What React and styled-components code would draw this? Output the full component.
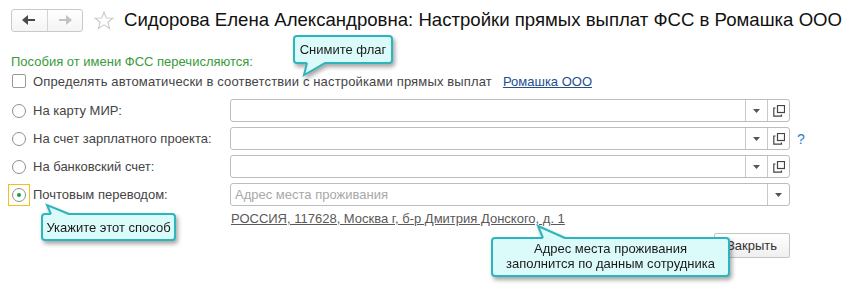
import React from "react";
import styled, { createGlobalStyle } from "styled-components";

const Global = createGlobalStyle`
  html, body {
    margin: 0;
    padding: 0;
    background: #fff;
  }
  body {
    font-family: "Liberation Sans", Arial, sans-serif;
    font-size: 13px;
    color: #4d4d4d;
  }
`;

const Page = styled.div`
  position: relative;
  width: 854px;
  height: 307px;
  padding: 8px 0 0 11px;
  box-sizing: border-box;
  overflow: hidden;
`;

const Header = styled.div`
  display: flex;
  align-items: center;
  height: 24px;
`;

const NavGroup = styled.div`
  display: flex;
  flex-shrink: 0;
  width: 72px;
  height: 23px;
  border: 1px solid #c9c9c9;
  border-radius: 3px;
  box-sizing: border-box;
  background: linear-gradient(#ffffff, #f4f4f4);
`;

const NavButton = styled.div`
  flex: 1;
  display: flex;
  align-items: center;
  justify-content: center;
  & + & {
    border-left: 1px solid #d4d4d4;
  }
`;

const Star = styled.div`
  display: flex;
  flex-shrink: 0;
  margin-left: 11px;
  margin-right: 10px;
`;

const Title = styled.h1`
  margin: 0;
  font-size: 18.6px;
  font-weight: normal;
  color: #111;
  white-space: nowrap;
`;

const Section = styled.div`
  margin-top: 22px;
  color: #3b9a3b;
  line-height: 16px;
`;

const CheckRow = styled.label`
  display: flex;
  align-items: center;
  gap: 7px;
  margin-top: 3px;
  height: 16px;
  color: #444;
  padding-left: 1px;
  letter-spacing: 0.15px;
`;

const CheckBox = styled.span`
  width: 14px;
  height: 14px;
  border: 1px solid #9a9a9a;
  border-radius: 2px;
  box-sizing: border-box;
  background: #fff;
`;

const Link = styled.a`
  margin-left: 4px;
  color: #23508c;
  text-decoration: underline;
  letter-spacing: 0;
`;

const Grid = styled.div`
  display: grid;
  grid-template-columns: 219px 560px auto;
  row-gap: 5px;
  margin-top: 10px;
  align-items: center;
`;

const Choice = styled.div`
  display: flex;
  align-items: center;
  gap: 7px;
  position: relative;
  padding-left: 1px;
  color: #444;
`;

const Focus = styled.span`
  position: absolute;
  left: -3px;
  top: 50%;
  width: 22px;
  height: 22px;
  margin-top: -11px;
  border: 1px solid #f2c21a;
  box-sizing: border-box;
`;

const Radio = styled.span`
  position: relative;
  width: 14px;
  height: 14px;
  border: 1px solid #8f8f8f;
  border-radius: 50%;
  box-sizing: border-box;
  background: #fff;
  display: flex;
  align-items: center;
  justify-content: center;
  &::after {
    content: "";
    width: 4px;
    height: 4px;
    border-radius: 50%;
    background: ${(p) => (p.$on ? "#1e9a4a" : "transparent")};
  }
`;

const Field = styled.div`
  display: flex;
  height: 23px;
  border: 1px solid #bdbdbd;
  border-radius: 3px;
  box-sizing: border-box;
  background: #fff;
`;

const Input = styled.div`
  flex: 1;
  padding-left: 4px;
  line-height: 21px;
  color: #a8a8a8;
`;

const FieldBtn = styled.div`
  width: 21px;
  border-left: 1px solid #c8c8c8;
  display: flex;
  align-items: center;
  justify-content: center;
`;

const Help = styled.span`
  margin-left: 7px;
  color: #1f7dcc;
  font-size: 14px;
`;

const Address = styled.a`
  grid-column: 2;
  color: #5a5a5a;
  text-decoration: underline;
  line-height: 16px;
  padding-left: 1px;
`;

const Footer = styled.div`
  display: flex;
  justify-content: flex-end;
  width: 779px;
  margin-top: 6px;
`;

const Button = styled.div`
  width: 76px;
  height: 25px;
  border: 1px solid #c4c4c4;
  border-radius: 2px;
  box-sizing: border-box;
  background: linear-gradient(#ffffff, #efefef);
  display: flex;
  align-items: center;
  justify-content: center;
  color: #333;
`;

const Tip = styled.div`
  position: absolute;
  box-sizing: border-box;
  border: 2px solid #2db5be;
  border-radius: 4px;
  background: #dbfbfb;
  color: #1a1a1a;
  line-height: ${(p) => (p.$lines > 1 ? "15px" : "19px")};
  padding-top: ${(p) => (p.$lines > 1 ? "2px" : "3px")};
  text-align: center;
  filter: drop-shadow(2px 3px 2px rgba(0, 0, 0, 0.35));
`;

const Tail = styled.svg`
  position: absolute;
  overflow: visible;
`;

function Tooltip({ x, y, w, h, lines = 1, tail, children }) {
  const { side, at, base, len, tip } = tail;
  const down = side === "bottom";
  return (
    <Tip $lines={lines} style={{ left: x, top: y, width: w, height: h }}>
      {children}
      <Tail
        width={base}
        height={len}
        style={down ? { left: at - 2, top: h - 4 } : { left: at - 2, top: -len }}
      >
        {down ? (
          <>
            <polygon points={`0,0 ${base},0 ${tip},${len}`} fill="#dbfbfb" />
            <polyline points={`0,1 ${tip},${len} ${base},1`} fill="none" stroke="#2db5be" strokeWidth="2" />
          </>
        ) : (
          <>
            <polygon points={`0,${len} ${base},${len} ${tip},0`} fill="#dbfbfb" />
            <polyline points={`0,${len - 1} ${tip},0 ${base},${len - 1}`} fill="none" stroke="#2db5be" strokeWidth="2" />
          </>
        )}
      </Tail>
    </Tip>
  );
}

const Arrow = ({ dir, color }) => (
  <svg width="14" height="10" viewBox="0 0 14 10">
    <g transform={dir === "right" ? "translate(14,0) scale(-1,1)" : undefined}>
      <polygon points="0,5 6,0 6,10" fill={color} />
      <rect x="5" y="4" width="8" height="2" fill={color} />
    </g>
  </svg>
);

const Caret = () => (
  <svg width="7" height="4" viewBox="0 0 7 4">
    <polygon points="0,0 7,0 3.5,4" fill="#555" />
  </svg>
);

const OpenIcon = () => (
  <svg width="12" height="12" viewBox="0 0 12 12">
    <rect x="4.5" y="0.5" width="7" height="7" fill="none" stroke="#444" strokeWidth="1.2" />
    <polyline points="2.5,3 0.8,3 0.8,11.2 8.5,11.2 8.5,9.5" fill="none" stroke="#444" strokeWidth="1.2" />
  </svg>
);

const rows = [
  { label: "На карту МИР:", open: true },
  { label: "На счет зарплатного проекта:", open: true, help: true },
  { label: "На банковский счет:", open: true },
  { label: "Почтовым переводом:", on: true, placeholder: "Адрес места проживания" },
];

export default function App() {
  return (
    <Page>
      <Global />
      <Header>
        <NavGroup>
          <NavButton>
            <Arrow color="#4a4a4a" />
          </NavButton>
          <NavButton>
            <Arrow dir="right" color="#c2c2c2" />
          </NavButton>
        </NavGroup>
        <Star>
          <svg width="20" height="19" viewBox="0 0 20 19">
            <polygon
              points="10,1 12.4,7 18.8,7.2 13.8,11.2 15.6,17.6 10,13.9 4.4,17.6 6.2,11.2 1.2,7.2 7.6,7"
              fill="none"
              stroke="#c9c9c9"
              strokeWidth="1.1"
            />
          </svg>
        </Star>
        <Title>Сидорова Елена Александровна: Настройки прямых выплат ФСС в Ромашка ООО</Title>
      </Header>

      <Section>Пособия от имени ФСС перечисляются:</Section>
      <CheckRow>
        <CheckBox />
        Определять автоматически в соответствии с настройками прямых выплат
        <Link>Ромашка ООО</Link>
      </CheckRow>

      <Grid>
        {rows.map((r) => (
          <React.Fragment key={r.label}>
            <Choice>
              {r.on && <Focus />}
              <Radio $on={r.on} />
              {r.label}
            </Choice>
            <Field>
              <Input>{r.placeholder}</Input>
              <FieldBtn>
                <Caret />
              </FieldBtn>
              {r.open && (
                <FieldBtn>
                  <OpenIcon />
                </FieldBtn>
              )}
            </Field>
            <div>{r.help && <Help>?</Help>}</div>
          </React.Fragment>
        ))}
        <Address>РОССИЯ, 117628, Москва г, б-р Дмитрия Донского, д. 1</Address>
      </Grid>

      <Footer>
        <Button>Закрыть</Button>
      </Footer>

      <Tooltip x={293} y={35} w={100} h={29} tail={{ side: "bottom", at: 14, base: 18, len: 13, tip: -3 }}>
        Снимите флаг
      </Tooltip>
      <Tooltip x={41} y={213} w={135} h={28} tail={{ side: "top", at: 10, base: 18, len: 10, tip: -4 }}>
        Укажите этот способ
      </Tooltip>
      <Tooltip x={491} y={237} w={239} h={40} lines={2} tail={{ side: "top", at: 52, base: 22, len: 13, tip: -5 }}>
        Адрес места проживания
        <br />
        заполнится по данным сотрудника
      </Tooltip>
    </Page>
  );
}
